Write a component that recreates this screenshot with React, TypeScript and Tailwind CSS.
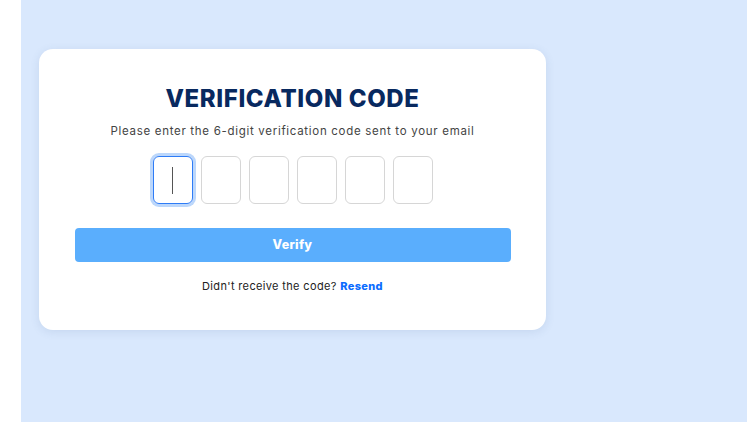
export default function App() {
  const boxes = [0, 1, 2, 3, 4, 5];

  return (
    <div className="flex w-[747px] h-[422px] overflow-hidden bg-white" style={{ fontFamily: 'Inter, "Open Sans", sans-serif' }}>
      <div className="w-[21px] shrink-0 bg-white" />
      <div className="flex-1 bg-[#d9e8fd] pl-[18px] pt-[49px]">
        <div className="w-[507px] h-[281px] bg-white rounded-[14px] shadow-[0_2px_10px_rgba(60,90,140,0.12)] px-[36px] pt-[35px] flex flex-col items-center">
          <h1 className="text-[24px] leading-[30px] font-extrabold text-[#08295f] tracking-[0.6px]">VERIFICATION CODE</h1>
          <p className="mt-[9px] text-[11.5px] leading-[16px] text-[#444] tracking-[0.7px]">
            Please enter the 6-digit verification code sent to your email
          </p>

          <div className="mt-[17px] flex gap-[8px]">
            {boxes.map((i) =>
              i === 0 ? (
                <div
                  key={i}
                  className="w-[40px] h-[48px] rounded-[6px] border border-[#2f7cf6] ring-[3px] ring-[#bcd7fb] flex items-center justify-center"
                >
                  <div className="w-px h-[27px] bg-[#555]" />
                </div>
              ) : (
                <div key={i} className="w-[40px] h-[48px] rounded-[6px] border border-[#d6d6d6] bg-white" />
              )
            )}
          </div>

          <button className="mt-[24px] w-[436px] h-[34px] rounded-[4px] bg-[#5aaefd] text-white text-[12.5px] font-extrabold tracking-[0.3px]">
            Verify
          </button>

          <p className="mt-[16px] text-[11px] leading-[16px] text-[#222] tracking-[0.35px]">
            Didn't receive the code? <span className="font-extrabold text-[#0b6cff]">Resend</span>
          </p>
        </div>
      </div>
    </div>
  );
}
